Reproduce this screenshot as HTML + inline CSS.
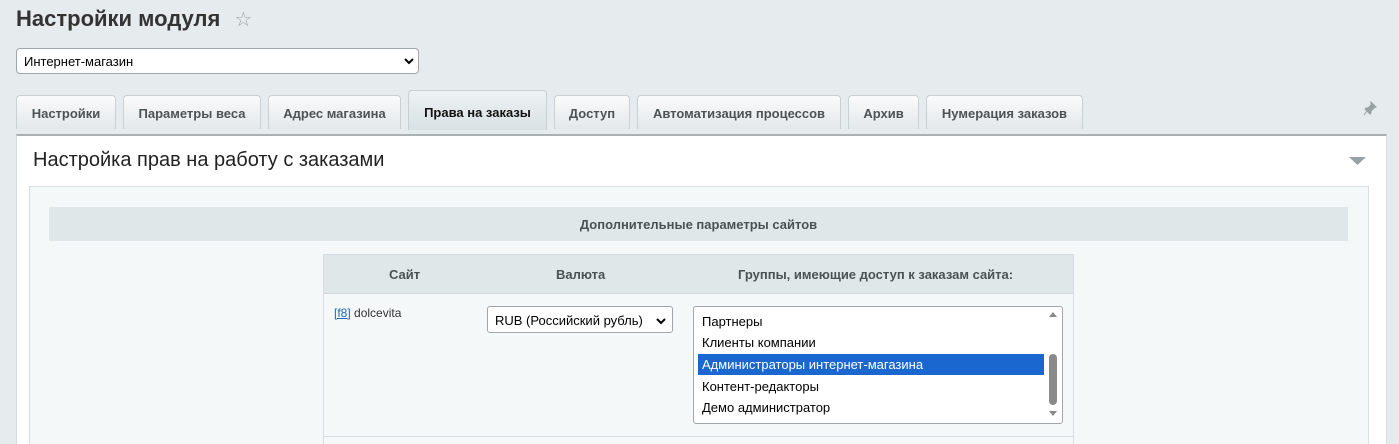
<!DOCTYPE html>
<html><head><meta charset="utf-8"><style>
*{box-sizing:border-box;margin:0;padding:0}
html{width:1399px;height:444px;overflow:hidden}
body{width:1399px;height:444px;overflow:hidden;background:#e6ebed;font-family:"Liberation Sans",Arial,sans-serif;position:relative}
.abs{position:absolute}
h1{position:absolute;left:16px;top:6px;font-size:22px;font-weight:bold;color:#333}
.sel{position:absolute;left:16px;top:48px;width:403px;height:26px;background:#fff;border:1px solid #a0a7ab;border-radius:4px;font-size:13px;padding:5px 0 0 7px;color:#000}
.tab{position:absolute;top:95px;height:34px;border:1px solid #c8d0d3;border-bottom:none;border-radius:4px 4px 0 0;background:linear-gradient(#fafbfb,#e3e8ea);font-size:13px;font-weight:bold;color:#4d5355;text-align:center;padding-top:10px}
.tab.act{top:90px;height:40px;background:linear-gradient(#eef2f3,#d9e1e4);color:#111;padding-top:14px}
.panel{position:absolute;left:16px;top:134px;width:1371px;height:310px;background:#fff;border-top:2px solid #a9b1b4;border-left:1px solid #d6dcdf;border-right:1px solid #d6dcdf}
.inner{position:absolute;left:29px;top:186px;width:1340px;height:258px;background:#f5f8f9;border:1px solid #d8e0e3;border-bottom:none}
.bar{position:absolute;left:49px;top:207px;width:1299px;height:34px;background:#e0e7e9;font-size:13px;font-weight:bold;color:#4b5254;text-align:center;padding-top:10px}
.tbl{position:absolute;left:323px;top:254px;width:751px;height:190px;border:1px solid #d6dde0;border-bottom:none;background:#f5f8f9}
.th{position:absolute;top:0;height:39px;width:100%;background:#e0e7e9;border-bottom:1px solid #d0d8db}
.th span{position:absolute;top:12px;font-size:13px;font-weight:bold;color:#4b5254}
.list{position:absolute;left:693px;top:306px;width:370px;height:118px;background:#fff;border:1px solid #a0a7ab;border-radius:3px;font-size:13px;color:#000}
.list div{position:absolute;left:4px;width:346px;height:21px;padding:3px 0 0 4px}
</style></head><body>
<h1>Настройки модуля <span style="color:#9ea5a8;font-size:20px;margin-left:8px;font-weight:normal">☆</span></h1>
<div class="sel">Интернет-магазин<svg class="abs" style="left:387px;top:8px" width="10" height="8" viewBox="0 0 10 8"><path d="M1 2l4 4 4-4" stroke="#000" stroke-width="2" fill="none"/></svg></div>
<div class="tab" style="left:16px;width:100px">Настройки</div>
<div class="tab" style="left:123px;width:138px">Параметры веса</div>
<div class="tab" style="left:268px;width:133px">Адрес магазина</div>
<div class="tab act" style="left:408px;width:139px">Права на заказы</div>
<div class="tab" style="left:554px;width:76px">Доступ</div>
<div class="tab" style="left:637px;width:204px">Автоматизация процессов</div>
<div class="tab" style="left:848px;width:71px">Архив</div>
<div class="tab" style="left:926px;width:157px">Нумерация заказов</div>
<svg class="abs" style="left:1362px;top:100px" width="16" height="16" viewBox="0 0 16 16"><path d="M9 2l5 5-2 1-3 3 0 2-1 1-5-5 1-1 2 0 3-3z M5 11l-3 4" fill="#9aa1a4" stroke="#9aa1a4" stroke-width="1"/></svg>
<div class="panel"></div>
<div class="abs" style="left:33px;top:149px;font-size:20px;color:#222">Настройка прав на работу с заказами</div>
<svg class="abs" style="left:1349px;top:157px" width="17" height="9"><path d="M0 0h17l-8.5 8z" fill="#9aa1a4"/></svg>
<div class="inner"></div>
<div class="bar">Дополнительные параметры сайтов</div>
<div class="tbl"><div class="th"><span style="left:65px">Сайт</span><span style="left:232px">Валюта</span><span style="left:414px">Группы, имеющие доступ к заказам сайта:</span></div>
<div class="abs" style="left:0;top:181px;width:100%;border-top:1px solid #d6dde0"></div></div>
<div class="abs" style="left:334px;top:306px;font-size:12px;color:#333"><span style="color:#2067b0;text-decoration:underline">[f8]</span> dolcevita</div>
<div class="abs" style="left:487px;top:306px;width:186px;height:27px;background:#fff;border:1px solid #a0a7ab;border-radius:3px;font-size:13px;padding:6px 0 0 7px">RUB (Российский рубль)<svg class="abs" style="left:168px;top:10px" width="10" height="8" viewBox="0 0 10 8"><path d="M1 2l4 4 4-4" stroke="#000" stroke-width="2" fill="none"/></svg></div>
<div class="list">
<div style="top:4px">Партнеры</div>
<div style="top:25px">Клиенты компании</div>
<div style="top:47px;background:#1a67d0;color:#fff">Администраторы интернет-магазина</div>
<div style="top:69px">Контент-редакторы</div>
<div style="top:90px">Демо администратор</div>
<svg class="abs" style="left:355px;top:5px" width="8" height="6"><path d="M0 5h8L4 0z" fill="#888"/></svg>
<svg class="abs" style="left:355px;top:104px" width="8" height="6"><path d="M0 0h8L4 5z" fill="#888"/></svg>
<div class="abs" style="left:355px;top:47px;width:8px;height:51px;border-radius:4px;background:#8a8a8a"></div>
</div>
</body></html>
